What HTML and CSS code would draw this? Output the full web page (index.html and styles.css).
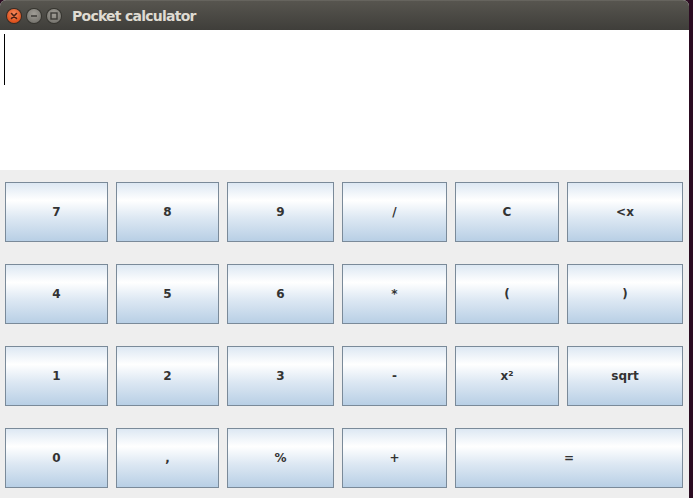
FILE: index.html
```html
<!DOCTYPE html>
<html lang="en">
<head>
    <meta charset="UTF-8">
    <meta name="viewport" content="width=device-width, initial-scale=1.0">
    <title>Pocket calculator</title>
    <link rel="stylesheet" href="styles.css">
</head>
<body>
    <div class="window">
        <div class="titlebar">
            <div class="controls">
                <span class="ctl ctl-close">
                    <svg width="14" height="14" viewBox="0 0 14 14"><path d="M4.5 4.5 L9.5 9.5 M9.5 4.5 L4.5 9.5" stroke="#4a2014" stroke-width="1.6" stroke-linecap="round"/></svg>
                </span>
                <span class="ctl ctl-min">
                    <svg width="14" height="14" viewBox="0 0 14 14"><path d="M4 7 H10" stroke="#3c3b37" stroke-width="1.6"/></svg>
                </span>
                <span class="ctl ctl-max">
                    <svg width="14" height="14" viewBox="0 0 14 14"><rect x="4" y="4" width="6" height="6" fill="none" stroke="#3c3b37" stroke-width="1.4"/></svg>
                </span>
            </div>
            <span class="title">Pocket calculator</span>
        </div>

        <div class="display"><span class="caret"></span></div>

        <div class="keys">
            <button class="key">7</button>
            <button class="key">8</button>
            <button class="key">9</button>
            <button class="key">/</button>
            <button class="key">C</button>
            <button class="key">&lt;x</button>

            <button class="key">4</button>
            <button class="key">5</button>
            <button class="key">6</button>
            <button class="key">*</button>
            <button class="key">(</button>
            <button class="key">)</button>

            <button class="key">1</button>
            <button class="key">2</button>
            <button class="key">3</button>
            <button class="key">-</button>
            <button class="key">x²</button>
            <button class="key">sqrt</button>

            <button class="key">0</button>
            <button class="key">,</button>
            <button class="key">%</button>
            <button class="key">+</button>
            <button class="key key-wide">=</button>
        </div>
    </div>
</body>
</html>
```

FILE: styles.css
```css
*{
    margin: 0px;
    padding: 0px;
    box-sizing: border-box;
}

body{
    background-color: #2c0c22;
    font-family: "DejaVu Sans", Arial, sans-serif;
    overflow: hidden;
}

.window{
    width: 689px;
    height: 498px;
    background-color: #eeeeee;
    border-radius: 6px 6px 0px 0px;
    overflow: hidden;
}

.titlebar{
    height: 30px;
    display: flex;
    align-items: center;
    background: linear-gradient(#57554f, #3f3e3a);
    border-top: 1px solid #66645e;
    padding-top: 1px;
}

.controls{
    display: flex;
    align-items: center;
    gap: 6px;
    padding-left: 7px;
}

.ctl{
    width: 14px;
    height: 14px;
    border-radius: 50%;
    display: flex;
}

.ctl-close{
    background: radial-gradient(circle at 50% 35%, #f58a5e, #e0521d 70%, #b8400f);
    box-shadow: 0px 0px 0px 1px #3a2a22;
}

.ctl-min,
.ctl-max{
    background: radial-gradient(circle at 50% 35%, #a09d96, #7b7973 70%, #5f5d58);
    box-shadow: 0px 0px 0px 1px #35342f;
}

.title{
    margin-left: 11px;
    color: #dfdbd2;
    font-size: 14px;
    font-weight: bold;
    letter-spacing: -0.75px;
}

.display{
    height: 140px;
    background-color: #ffffff;
    padding: 4px 0px 0px 4px;
}

.caret{
    display: block;
    width: 1px;
    height: 51px;
    background-color: #000000;
}

.keys{
    display: grid;
    grid-template-columns: 103px 103px 107px 105px 104px 116px;
    grid-auto-rows: 60px;
    column-gap: 8px;
    row-gap: 22px;
    padding: 12px 0px 0px 5px;
}

.key{
    border: 1px solid #7a8a99;
    background: linear-gradient(#dde8f3 0%, #ffffff 30%, #dde8f3 60%, #b8cfe5 100%);
    font-family: "DejaVu Sans", Arial, sans-serif;
    font-size: 12px;
    font-weight: bold;
    color: #333333;
}

.key-wide{
    grid-column: span 2;
}
```
